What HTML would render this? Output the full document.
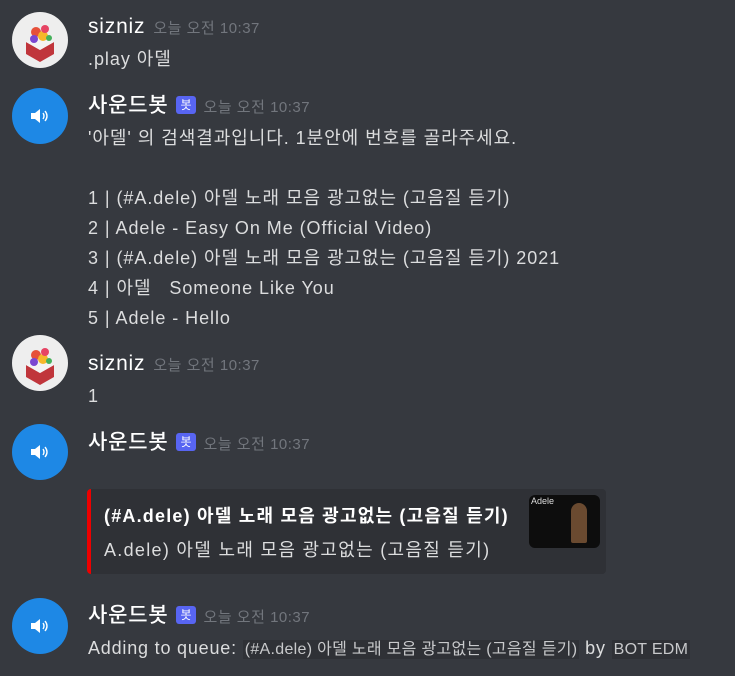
<!DOCTYPE html>
<html><head><meta charset="utf-8"><style>
body{margin:0;width:735px;height:676px;background:#36393f;overflow:hidden;font-family:"Liberation Sans","Noto Sans CJK KR",sans-serif;color:#dcddde;position:relative}
.a{position:absolute;left:12px;width:56px;height:56px;border-radius:50%}
.bot{background:#1e88e5}
.user{background:#eeeeee;overflow:hidden}
.t{position:absolute;left:88px;white-space:nowrap;font-size:18px;line-height:20px;letter-spacing:0.95px}
.n{font-size:21px;color:#fff;font-weight:500;letter-spacing:0.8px}
.ts{font-size:15px;color:#72767d;margin-left:8px;letter-spacing:0.5px}
.tag{display:inline-block;background:#5865f2;color:#fff;font-size:12px;line-height:18px;height:18px;padding:0 4px;border-radius:3px;vertical-align:3px;margin-left:8px;letter-spacing:0}
.code{background:#2f3136;padding:1px 2px;font-size:16px;color:#c8c9cb;letter-spacing:0.3px}
</style></head><body>

<div class="a user" style="top:12px"><svg width="56" height="56" viewBox="0 0 56 56"><path d="M14 30 L28 38 L42 30 L42 42 L28 50 L14 42Z" fill="#c0353b"/><path d="M14 30 L28 22 L42 30 L28 38Z" fill="#f3f3f3"/><circle cx="24" cy="20" r="5" fill="#e6503a"/><circle cx="31" cy="24" r="5" fill="#f5b72a"/><circle cx="22" cy="27" r="4" fill="#7b47d1"/><circle cx="33" cy="17" r="4" fill="#e64464"/><circle cx="37" cy="26" r="3" fill="#44b15a"/></svg></div>
<div class="t" style="top:17px"><span class="n">sizniz</span><span class="ts">오늘 오전 10:37</span></div>
<div class="t" style="top:49px">.play 아델</div>

<div class="a bot" style="top:88px"></div>
<div class="t" style="top:96px"><span class="n">사운드봇</span><span class="tag">봇</span><span class="ts">오늘 오전 10:37</span></div>
<div class="t" style="top:128px">'아델' 의 검색결과입니다. 1분안에 번호를 골라주세요.</div>
<div class="t" style="top:188px">1 | (#A.dele) 아델 노래 모음 광고없는 (고음질 듣기)</div>
<div class="t" style="top:218px">2 | Adele - Easy On Me (Official Video)</div>
<div class="t" style="top:248px">3 | (#A.dele) 아델 노래 모음 광고없는 (고음질 듣기) 2021</div>
<div class="t" style="top:278px">4 | 아델 &nbsp; Someone Like You</div>
<div class="t" style="top:308px">5 | Adele - Hello</div>

<div class="a user" style="top:335px"><svg width="56" height="56" viewBox="0 0 56 56"><path d="M14 30 L28 38 L42 30 L42 42 L28 50 L14 42Z" fill="#c0353b"/><path d="M14 30 L28 22 L42 30 L28 38Z" fill="#f3f3f3"/><circle cx="24" cy="20" r="5" fill="#e6503a"/><circle cx="31" cy="24" r="5" fill="#f5b72a"/><circle cx="22" cy="27" r="4" fill="#7b47d1"/><circle cx="33" cy="17" r="4" fill="#e64464"/><circle cx="37" cy="26" r="3" fill="#44b15a"/></svg></div>
<div class="t" style="top:354px"><span class="n">sizniz</span><span class="ts">오늘 오전 10:37</span></div>
<div class="t" style="top:386px">1</div>

<div class="a bot" style="top:424px"></div>
<div class="t" style="top:433px"><span class="n">사운드봇</span><span class="tag">봇</span><span class="ts">오늘 오전 10:37</span></div>

<div style="position:absolute;left:87px;top:489px;width:519px;height:85px;background:#2f3136;border-radius:4px;border-left:4px solid #e00;box-sizing:border-box"></div>
<div class="t" style="top:506px;left:104px;font-weight:bold;color:#fff;letter-spacing:1.2px">(#A.dele) 아델 노래 모음 광고없는 (고음질 듣기)</div>
<div class="t" style="top:540px;left:104px;letter-spacing:1.3px">A.dele) 아델 노래 모음 광고없는 (고음질 듣기)</div>
<div style="position:absolute;left:529px;top:495px;width:71px;height:53px;background:#0d0d0d;border-radius:6px;overflow:hidden"><span style="position:absolute;left:2px;top:1px;font-size:9px;color:#ddd">Adele</span><div style="position:absolute;left:42px;top:8px;width:16px;height:40px;background:#6a4a30;border-radius:8px 8px 2px 2px"></div></div>

<div class="a bot" style="top:598px"></div>
<div class="t" style="top:606px"><span class="n">사운드봇</span><span class="tag">봇</span><span class="ts">오늘 오전 10:37</span></div>
<div class="t" style="top:638px;letter-spacing:0.8px">Adding to queue: <span class="code">(#A.dele) 아델 노래 모음 광고없는 (고음질 듣기)</span> by <span class="code">BOT EDM</span></div>

<svg style="position:absolute;left:0;top:0" width="80" height="676">
<g fill="#fff"><g transform="translate(40,116)"><path d="M-9 -3h4l5-4v14l-5-4h-4z"/><path d="M3 -3q2 3 0 6M5 -5q4 5 0 10" stroke="#fff" stroke-width="1.4" fill="none"/></g>
<g transform="translate(40,452)"><path d="M-9 -3h4l5-4v14l-5-4h-4z"/><path d="M3 -3q2 3 0 6M5 -5q4 5 0 10" stroke="#fff" stroke-width="1.4" fill="none"/></g>
<g transform="translate(40,626)"><path d="M-9 -3h4l5-4v14l-5-4h-4z"/><path d="M3 -3q2 3 0 6M5 -5q4 5 0 10" stroke="#fff" stroke-width="1.4" fill="none"/></g></g>
</svg>
</body></html>
